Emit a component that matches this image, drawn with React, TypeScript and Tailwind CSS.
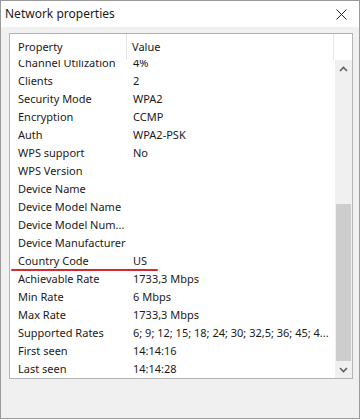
import React from "react";

const rows: [string, string][] = [
  ["Channel Utilization", "4%"],
  ["Clients", "2"],
  ["Security Mode", "WPA2"],
  ["Encryption", "CCMP"],
  ["Auth", "WPA2-PSK"],
  ["WPS support", "No"],
  ["WPS Version", ""],
  ["Device Name", ""],
  ["Device Model Name", ""],
  ["Device Model Num...", ""],
  ["Device Manufacturer", ""],
  ["Country Code", "US"],
  ["Achievable Rate", "1733,3 Mbps"],
  ["Min Rate", "6 Mbps"],
  ["Max Rate", "1733,3 Mbps"],
  ["Supported Rates", "6; 9; 12; 15; 18; 24; 30; 32,5; 36; 45; 4..."],
  ["First seen", "14:14:16"],
  ["Last seen", "14:14:28"],
];

function Chevron({ up }: { up?: boolean }) {
  return (
    <svg width="9" height="6" viewBox="0 0 9 6">
      <path
        d={up ? "M1 5 L4.5 1.5 L8 5" : "M1 1 L4.5 4.5 L8 1"}
        fill="none"
        stroke="#606060"
        strokeWidth="1.6"
      />
    </svg>
  );
}

export default function App() {
  return (
    <div className="w-[362px] h-[420px] bg-white">
      <div
        className="relative w-[360px] h-[419px] bg-[#f0f0f0] border border-[#9a9a9a] flex flex-col text-[#1a1a1a]"
        style={{ fontFamily: '"Noto Sans", "Open Sans", sans-serif' }}
      >
        {/* Title bar */}
        <div className="h-[26px] bg-white flex items-center justify-between pl-[4px] pr-[12px]">
          <span className="text-[12px] leading-none">Network properties</span>
          <svg width="11" height="11" viewBox="0 0 11 11">
            <path d="M0.5 0.5 L10.5 10.5 M10.5 0.5 L0.5 10.5" stroke="#222" strokeWidth="1" />
          </svg>
        </div>

        {/* List view */}
        <div className="ml-[8px] mt-[6px] w-[344px] h-[346px] border border-[#b4b4b4] bg-white flex flex-col">
          <div className="h-[26px] flex text-[11px] shrink-0">
            <div className="w-[117px] border-r border-[#e5e5e5] pl-[8px] flex items-center">Property</div>
            <div className="w-[207px] border-r border-[#e5e5e5] pl-[5px] flex items-center">Value</div>
            <div className="flex-1" />
          </div>
          <div className="flex flex-1 min-h-0">
            <div className="flex-1 overflow-hidden">
              <div className="-mt-[6px]">
                {rows.map(([k, v]) => (
                  <div key={k} className="h-[18px] flex items-center text-[11px] whitespace-nowrap">
                    <div className="w-[117px] shrink-0 pl-[8px] overflow-hidden">{k}</div>
                    <div className="w-[208px] shrink-0 pl-[6px] overflow-hidden">{v}</div>
                  </div>
                ))}
              </div>
            </div>
            {/* Scrollbar */}
            <div className="w-[17px] shrink-0 bg-[#f0f0f0] flex flex-col">
              <div className="h-[17px] flex items-center justify-center">
                <Chevron up />
              </div>
              <div className="flex-1 flex flex-col justify-end px-[1px]">
                <div className="h-[157px] bg-[#cdcdcd]" />
              </div>
              <div className="h-[17px] flex items-center justify-center">
                <Chevron />
              </div>
            </div>
          </div>
        </div>

        {/* Red annotation underline */}
        <div className="absolute left-[10px] top-[268px] w-[147px] h-[2px] bg-[#d42a32] rounded-full" />
      </div>
    </div>
  );
}
